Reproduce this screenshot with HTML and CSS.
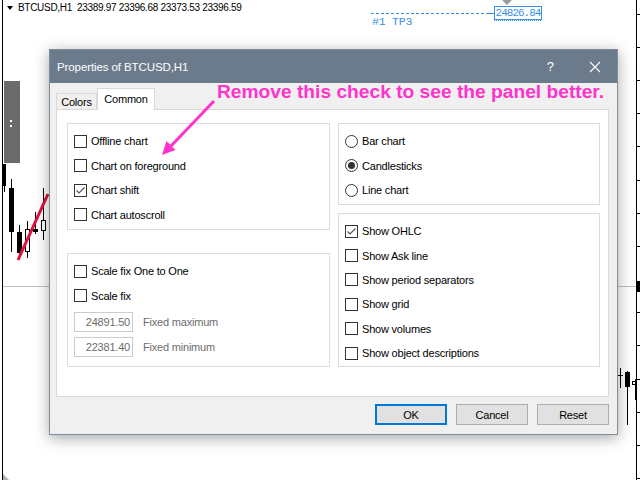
FILE: index.html
```html
<!DOCTYPE html>
<html>
<head>
<meta charset="utf-8">
<link rel="stylesheet" href="styles.css">
</head>
<body>
<div class="chart">
  <svg class="chart-svg" width="640" height="480" viewBox="0 0 640 480">
    <rect x="2" y="0" width="1" height="480" fill="#000"/>
    <rect x="636" y="0" width="1" height="480" fill="#000"/>
    <g fill="#000">
      <rect x="637" y="14" width="3" height="1"/>
      <rect x="637" y="47" width="3" height="1"/>
      <rect x="637" y="80" width="3" height="1"/>
      <rect x="637" y="113" width="3" height="1"/>
      <rect x="637" y="146" width="3" height="1"/>
      <rect x="637" y="180" width="3" height="1"/>
      <rect x="637" y="213" width="3" height="1"/>
      <rect x="637" y="246" width="3" height="1"/>
      <rect x="637" y="312" width="3" height="1"/>
      <rect x="637" y="345" width="3" height="1"/>
      <rect x="637" y="379" width="3" height="1"/>
      <rect x="637" y="412" width="3" height="1"/>
      <rect x="637" y="445" width="3" height="1"/>
      <rect x="637" y="478" width="3" height="1"/>
      <rect x="637" y="281" width="3" height="11"/>
    </g>
    <rect x="3" y="286" width="633" height="1" fill="#c0c0c0"/>
    <polygon points="7,6 13,6 10,10" fill="#000"/>
    <rect x="4" y="81" width="16" height="82" fill="#6b6b6b"/>
    <rect x="10" y="120" width="2" height="2" fill="#fff"/>
    <rect x="10" y="125" width="2" height="2" fill="#fff"/>
    <rect x="3" y="164" width="3" height="22" fill="#000"/>
    <rect x="4" y="186" width="1" height="6" fill="#000"/>
    <rect x="11" y="179" width="1" height="73" fill="#000"/>
    <rect x="9" y="188" width="5" height="44" fill="#000"/>
    <rect x="19" y="225" width="1" height="30" fill="#000"/>
    <rect x="17" y="232" width="5" height="21" fill="#000"/>
    <rect x="27" y="221" width="1" height="37" fill="#000"/>
    <rect x="25.5" y="229.5" width="4" height="22" fill="#fff" stroke="#000"/>
    <rect x="35" y="212" width="1" height="22" fill="#000"/>
    <rect x="33" y="229" width="5" height="3" fill="#000"/>
    <rect x="43" y="188" width="1" height="52" fill="#000"/>
    <rect x="41.5" y="220.5" width="4" height="10" fill="#fff" stroke="#000"/>
    <line x1="18" y1="260" x2="48" y2="194" stroke="#dc143c" stroke-width="3"/>
    <rect x="620" y="368" width="1" height="20" fill="#000"/>
    <rect x="618" y="375" width="5" height="1" fill="#000"/>
    <rect x="627" y="371" width="1" height="54" fill="#000"/>
    <rect x="625" y="372" width="5" height="15" fill="#000"/>
    <rect x="635" y="379" width="1" height="21" fill="#000"/>
    <rect x="632.5" y="381.5" width="3" height="3" fill="#fff" stroke="#000"/>
    <line x1="371" y1="13.5" x2="488" y2="13.5" stroke="#3b8fe5" stroke-dasharray="3,2"/>
    <line x1="488" y1="13.5" x2="494" y2="13.5" stroke="#3b8fe5"/>
    <rect x="494.5" y="6.5" width="47" height="13" fill="#fff" stroke="#3b8fe5"/>
    <line x1="494" y1="20.5" x2="542" y2="20.5" stroke="#3b8fe5" stroke-dasharray="1,1"/>
    <polygon points="502,0 512,0 507,5" fill="#9a9a9a"/>
    <polygon points="3,474 3,480 9,480" fill="#b0b0b0"/>
  </svg>
  <div class="chart-header">BTCUSD,H1&nbsp;&nbsp;23389.97 23396.68 23373.53 23396.59</div>
  <div class="tp-label">#1 TP3</div>
  <div class="tp-price">24826.84</div>
</div>

<div class="dialog">
  <div class="titlebar">
    <span class="title">Properties of BTCUSD,H1</span>
    <span class="help">?</span>
    <svg class="close" width="12" height="12" viewBox="0 0 12 12"><path d="M1 1 L11 11 M11 1 L1 11" stroke="#fff" stroke-width="1.1" fill="none"/></svg>
  </div>
  <div class="dlg-body">
    <div class="tabs">
      <div class="tab">Colors</div>
      <div class="tab active">Common</div>
    </div>
    <div class="panel">
      <div class="col">
        <div class="group g-left1">
          <div class="row"><span class="cb"></span>Offline chart</div>
          <div class="row"><span class="cb"></span>Chart on foreground</div>
          <div class="row"><span class="cb"><svg width="11" height="11" viewBox="0 0 11 11"><path d="M1.5 5.5 L4 8 L9.5 2.5" stroke="#555" stroke-width="1.2" fill="none"/></svg></span>Chart shift</div>
          <div class="row"><span class="cb"></span>Chart autoscroll</div>
        </div>
        <div class="group g-left2">
          <div class="row"><span class="cb"></span>Scale fix One to One</div>
          <div class="row"><span class="cb"></span>Scale fix</div>
          <div class="field first"><span class="input">24891.50</span><span class="flabel">Fixed maximum</span></div>
          <div class="field"><span class="input">22381.40</span><span class="flabel">Fixed minimum</span></div>
        </div>
      </div>
      <div class="col">
        <div class="group g-right1">
          <div class="row"><span class="rb"></span>Bar chart</div>
          <div class="row"><span class="rb on"></span>Candlesticks</div>
          <div class="row"><span class="rb"></span>Line chart</div>
        </div>
        <div class="group g-right2">
          <div class="row r2"><span class="cb"><svg width="11" height="11" viewBox="0 0 11 11"><path d="M1.5 5.5 L4 8 L9.5 2.5" stroke="#555" stroke-width="1.2" fill="none"/></svg></span>Show OHLC</div>
          <div class="row r2"><span class="cb"></span>Show Ask line</div>
          <div class="row r2"><span class="cb"></span>Show period separators</div>
          <div class="row r2"><span class="cb"></span>Show grid</div>
          <div class="row r2"><span class="cb"></span>Show volumes</div>
          <div class="row r2"><span class="cb"></span>Show object descriptions</div>
        </div>
      </div>
    </div>
    <div class="buttons">
      <div class="btn default">OK</div>
      <div class="btn">Cancel</div>
      <div class="btn">Reset</div>
    </div>
  </div>
</div>

<div class="note">Remove this check to see the panel better.</div>
<svg class="arrow" width="640" height="480" viewBox="0 0 640 480">
  <line x1="214" y1="101" x2="171" y2="146" stroke="#ff33cc" stroke-width="3"/>
  <polygon points="162,155 175.5,150 166.5,141" fill="#ff33cc"/>
</svg>
</body>
</html>
```

FILE: styles.css
```css
html, body {
  margin: 0;
  padding: 0;
  width: 640px;
  height: 480px;
  overflow: hidden;
  background: #fff;
  font-family: "Liberation Sans", Arial, sans-serif;
}
body { position: relative; }

.chart {
  position: absolute;
  left: 0; top: 0;
  width: 640px; height: 480px;
}
.chart-svg { position: absolute; left: 0; top: 0; }
.chart-header {
  position: absolute;
  left: 18px; top: 2px;
  font-size: 10px;
  line-height: 12px;
  letter-spacing: -0.3px;
  color: #000;
  white-space: nowrap;
}
.tp-label {
  position: absolute;
  left: 372px; top: 15px;
  font-family: "Liberation Mono", "Courier New", monospace;
  font-size: 11.5px;
  line-height: 13px;
  letter-spacing: -0.2px;
  color: #3b8fe5;
  white-space: nowrap;
}
.tp-price {
  position: absolute;
  left: 495px; top: 7px;
  width: 46px;
  text-align: center;
  font-family: "Liberation Mono", "Courier New", monospace;
  font-size: 11px;
  line-height: 12px;
  letter-spacing: -1px;
  color: #3b8fe5;
}

.dialog {
  position: absolute;
  left: 49px; top: 49px;
  width: 569px; height: 386px;
  box-sizing: border-box;
  border: 1px solid #7f8c9b;
  background: #f0f0f0;
  box-shadow: 0 3px 14px rgba(0,0,0,0.35);
  display: flex;
  flex-direction: column;
}
.titlebar {
  height: 33px;
  background: #6b7b8c;
  color: #fff;
  display: flex;
  align-items: center;
  padding-left: 7px;
  flex: none;
}
.title { font-size: 11.5px; flex: 1; letter-spacing: -0.1px; }
.help { font-size: 13px; margin-right: 35px; }
.close { margin-right: 16px; }

.dlg-body {
  padding: 5px 8px 9px 6px;
  display: flex;
  flex-direction: column;
  font-size: 11px;
  letter-spacing: -0.2px;
  color: #000;
}
.tabs {
  height: 21px;
  display: flex;
  align-items: flex-end;
  position: relative;
  z-index: 1;
}
.tab {
  box-sizing: border-box;
  height: 16px;
  width: 41px;
  border: 1px solid #d9d9d9;
  border-bottom: none;
  background: #f0f0f0;
  display: flex;
  align-items: center;
  justify-content: center;
  padding-top: 1px;
}
.tab.active {
  height: 22px;
  width: 58px;
  margin-bottom: -1px;
  background: #fff;
  padding-bottom: 3px;
}
.panel {
  box-sizing: border-box;
  height: 288px;
  border: 1px solid #d9d9d9;
  background: #fff;
  padding: 13px 8px 0 10px;
  display: grid;
  grid-template-columns: 263px 262px;
  column-gap: 8px;
  align-items: start;
}
.col { display: flex; flex-direction: column; }
.group {
  border: 1px solid #dcdcdc;
  padding: 5px 6px 0 6px;
}
.g-left1 { height: 100px; }
.g-left2 { margin-top: 23px; height: 107px; }
.g-right1 { height: 75px; }
.g-right2 { margin-top: 8px; height: 147px; }

.row {
  height: 24.5px;
  display: flex;
  align-items: center;
  gap: 4px;
  white-space: nowrap;
}
.row.r2 { height: 24.4px; }
.cb {
  box-sizing: border-box;
  width: 13px; height: 13px;
  border: 1px solid #333;
  background: #fff;
  display: flex;
  align-items: center;
  justify-content: center;
  flex: none;
}
.rb {
  box-sizing: border-box;
  width: 13px; height: 13px;
  border: 1px solid #333;
  border-radius: 50%;
  background: #fff;
  display: flex;
  align-items: center;
  justify-content: center;
  flex: none;
}
.rb.on::after {
  content: "";
  width: 7px; height: 7px;
  border-radius: 50%;
  background: #333;
}
.field {
  display: flex;
  align-items: center;
  gap: 10px;
  margin-top: 5px;
}
.field.first { margin-top: 4px; }
.input {
  box-sizing: border-box;
  width: 59px; height: 20px;
  border: 1px solid #cccccc;
  background: #fff;
  color: #6d6d6d;
  text-align: right;
  padding-right: 2px;
  line-height: 18px;
}
.flabel { color: #6d6d6d; }

.buttons {
  display: flex;
  justify-content: flex-end;
  gap: 9px;
  margin-top: 7px;
}
.btn {
  box-sizing: border-box;
  width: 72px; height: 21px;
  border: 1px solid #adadad;
  background: #e1e1e1;
  display: flex;
  align-items: center;
  justify-content: center;
}
.btn.default {
  border: 2px solid #0078d7;
}

.note {
  position: absolute;
  left: 217px; top: 81px;
  font-size: 19.2px;
  line-height: 22px;
  font-weight: bold;
  color: #ff33cc;
  white-space: nowrap;
}
.arrow { position: absolute; left: 0; top: 0; pointer-events: none; }
```
